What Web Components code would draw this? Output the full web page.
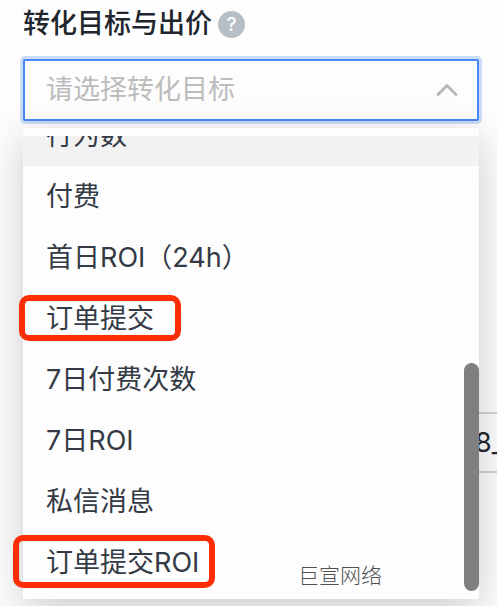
<!DOCTYPE html>
<html lang="zh-CN">
<head>
<meta charset="utf-8">
<meta name="viewport" content="width=device-width, initial-scale=1">
<title>转化目标与出价</title>
<style>
  body {
    margin: 0;
    min-height: 100vh;
    overflow: hidden;
    background: #fdfdfd;
    color: #343a45;
    font: 27px/30px Inter, "Noto Sans CJK SC", sans-serif;
  }
</style>
</head>
<body>
<goal-page>
  <field-title slot="title">转化目标与出价</field-title>
  <goal-select slot="select" placeholder="请选择转化目标">
    <goal-option active>行为数</goal-option>
    <goal-option>付费</goal-option>
    <goal-option>首日ROI（24h）</goal-option>
    <goal-option>订单提交</goal-option>
    <goal-option>7日付费次数</goal-option>
    <goal-option>7日ROI</goal-option>
    <goal-option>私信消息</goal-option>
    <goal-option>订单提交ROI</goal-option>
  </goal-select>
  <name-field slot="name" value="8_"></name-field>
</goal-page>
<page-watermark></page-watermark>

<script>
class FieldTitle extends HTMLElement {
  constructor() {
    super();
    this.attachShadow({ mode: "open" });
    this.shadowRoot.innerHTML = `
      <style>
        :host {
          display: flex;
          align-items: center;
          gap: 6px;
          height: 40px;
        }
        h2 {
          margin: 0;
          font-size: 27px;
          font-weight: 500;
          color: #20252e;
        }
        button {
          width: 27px;
          height: 27px;
          padding: 0;
          border: 0;
          border-radius: 50%;
          background: #b8bec6;
          color: #fff;
          font: 500 19px/27px Inter, sans-serif;
          text-align: center;
        }
      </style>
      <h2><slot></slot></h2>
      <button type="button" aria-label="帮助">?</button>
    `;
  }
}

class GoalOption extends HTMLElement {
  constructor() {
    super();
    this.attachShadow({ mode: "open" });
    this.shadowRoot.innerHTML = `
      <style>
        :host {
          display: flex;
          flex: none;
          align-items: center;
          height: 61px;
          padding: 0 23px;
          cursor: pointer;
        }
        :host([active]) {
          background: #f2f2f2;
        }
      </style>
      <slot></slot>
    `;
  }

  connectedCallback() {
    this.setAttribute("role", "option");
  }
}

class GoalSelect extends HTMLElement {
  constructor() {
    super();
    this.attachShadow({ mode: "open" });
  }

  connectedCallback() {
    const placeholder = this.getAttribute("placeholder") || "";

    this.shadowRoot.innerHTML = `
      <style>
        :host {
          display: block;
          position: relative;
        }
        .control {
          display: grid;
          align-items: center;
        }
        select {
          grid-area: 1 / 1;
          width: 100%;
          height: 62px;
          padding: 0 60px 0 21px;
          border: 2px solid #4a86fb;
          border-radius: 2px;
          outline: 0;
          box-shadow: 0 0 0 3px #cbdbf8;
          background: #fdfdfd;
          color: #bcbcbc;
          font: inherit;
          appearance: none;
        }
        svg {
          grid-area: 1 / 1;
          justify-self: end;
          margin-right: 20px;
          pointer-events: none;
        }
        .panel {
          position: absolute;
          top: calc(100% + 7px);
          left: 0;
          right: 0;
          padding: 8px 0 6px;
          border-radius: 2px;
          background: #fdfdfd;
          box-shadow: 0 10px 40px rgba(0, 0, 0, 0.2);
        }
        .list {
          display: flex;
          flex-direction: column;
          max-height: 457px;
          overflow-y: auto;
          scrollbar-width: none;
        }
        .thumb {
          position: absolute;
          right: 0;
          bottom: 8px;
          width: 15px;
          height: 228px;
          border-radius: 8px;
          background: #7f7f7f;
        }
        .mark {
          position: absolute;
          box-sizing: border-box;
          border: 6px solid #ff2d05;
          border-radius: 10px;
          pointer-events: none;
        }
        .short {
          left: -4px;
          top: 167px;
          width: 162px;
          height: 46px;
        }
        .long {
          left: -10px;
          top: 407px;
          width: 202px;
          height: 53px;
        }
        .source {
          position: absolute;
          right: 97px;
          bottom: 8px;
          color: #505050;
          font-size: 21px;
          font-weight: 300;
        }
      </style>
      <div class="control">
        <select aria-label="${placeholder}">
          <option>${placeholder}</option>
        </select>
        <svg width="24" height="16" viewBox="0 0 24 16" fill="none" stroke="#b8b8b8" stroke-width="3" stroke-linecap="round" stroke-linejoin="round">
          <path d="M3 12.500L12 3.500L21 12.500"/>
        </svg>
      </div>
      <div class="panel">
        <div class="list" role="listbox"><slot></slot></div>
        <div class="thumb"></div>
        <div class="mark short"></div>
        <div class="mark long"></div>
        <div class="source">巨宣网络</div>
      </div>
    `;

    // open with the end of the list in view
    const list = this.shadowRoot.querySelector(".list");
    requestAnimationFrame(() => {
      list.scrollTop = list.scrollHeight;
    });
  }
}

class NameField extends HTMLElement {
  constructor() {
    super();
    this.attachShadow({ mode: "open" });
  }

  connectedCallback() {
    this.shadowRoot.innerHTML = `
      <style>
        :host {
          display: block;
        }
        input {
          box-sizing: border-box;
          width: 100%;
          height: 61px;
          padding: 0 0 0 10px;
          border: 2px solid #d2d2d2;
          border-width: 2px 0;
          background: #fdfdfd;
          color: #20252e;
          font: inherit;
        }
      </style>
      <input type="text" aria-label="名称" value="${this.getAttribute("value") || ""}">
    `;
  }
}

class GoalPage extends HTMLElement {
  constructor() {
    super();
    this.attachShadow({ mode: "open" });
    this.shadowRoot.innerHTML = `
      <style>
        :host {
          display: flex;
          flex-direction: column;
          padding: 4px 18px 0 23px;
        }
        .select {
          margin-top: 15px;
          z-index: 1;
        }
        .name {
          align-self: flex-end;
          width: 32px;
          margin: 291px -18px 0 0;
        }
      </style>
      <slot name="title"></slot>
      <div class="select"><slot name="select"></slot></div>
      <div class="name"><slot name="name"></slot></div>
    `;
  }
}

class PageWatermark extends HTMLElement {
  constructor() {
    super();
    this.attachShadow({ mode: "open" });
  }

  connectedCallback() {
    let stamps = "";
    for (let x = 36; x < 497; x += 322) {
      for (let y = -136; y < 600; y += 76) {
        stamps += `
          <g transform="translate(${x} ${y}) rotate(46)">
            <text y="-33">wb_wangshuai10 -</text>
            <text>2024/04/28 20:35:10 -</text>
          </g>`;
      }
    }

    this.shadowRoot.innerHTML = `
      <style>
        :host {
          position: absolute;
          inset: 0;
          z-index: 2;
          overflow: hidden;
          pointer-events: none;
        }
        svg {
          display: block;
          width: 100%;
          height: 100%;
        }
        text {
          font: 22px Inter, sans-serif;
          fill: #000;
          fill-opacity: 0.014;
        }
      </style>
      <svg aria-hidden="true">${stamps}</svg>
    `;
  }
}

customElements.define("field-title", FieldTitle);
customElements.define("goal-option", GoalOption);
customElements.define("goal-select", GoalSelect);
customElements.define("name-field", NameField);
customElements.define("goal-page", GoalPage);
customElements.define("page-watermark", PageWatermark);
</script>
</body>
</html>
